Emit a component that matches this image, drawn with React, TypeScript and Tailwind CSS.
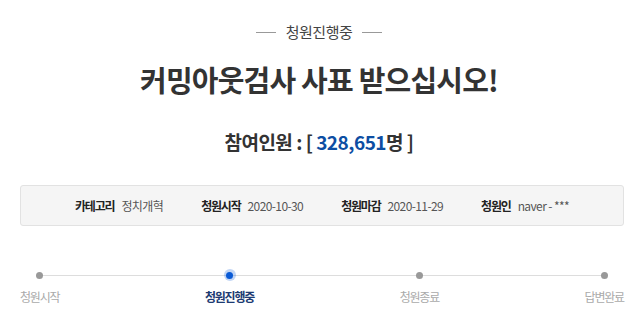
import React from 'react';

const info = [
  { label: '카테고리', value: '정치개혁' },
  { label: '청원시작', value: '2020-10-30' },
  { label: '청원마감', value: '2020-11-29' },
  { label: '청원인', value: 'naver - ***' },
];

const steps = [
  { label: '청원시작', active: false },
  { label: '청원진행중', active: true },
  { label: '청원종료', active: false },
  { label: '답변완료', active: false },
];

export default function App() {
  return (
    <div className="w-[638px] h-[332px] overflow-hidden bg-white pt-[22px] font-['Noto_Sans_CJK_KR','Noto_Sans',sans-serif] text-[#333]">
      {/* status */}
      <div className="flex h-[20px] items-center justify-center gap-[10px]">
        <span className="h-px w-[20px] bg-[#999]" />
        <span className="text-[15px] leading-[20px] tracking-[-0.5px] text-[#444]">청원진행중</span>
        <span className="h-px w-[20px] bg-[#999]" />
      </div>

      {/* title */}
      <h1 className="mt-[20px] text-center text-[29px] font-bold leading-[34px] tracking-[-0.8px] text-[#333]">
        커밍아웃검사 사표 받으십시오!
      </h1>

      {/* participants */}
      <p className="mt-[33px] text-center text-[19px] font-bold leading-[26px] tracking-[-0.5px] text-[#333]">
        참여인원 : [ <span className="text-[#0d4ea3]">328,651</span>명 ]
      </p>

      {/* info box */}
      <div className="ml-[20px] mt-[30px] flex h-[41px] w-[604px] items-center justify-center gap-[38px] rounded-[3px] border border-[#e2e2e2] bg-[#f5f5f5]">
        {info.map((item) => (
          <div key={item.label} className="flex items-center text-[12px] leading-[16px]">
            <span className="font-bold tracking-[-1.2px] text-[#222]">{item.label}</span>
            <span className="ml-[7px] tracking-[-0.6px] text-[#555]">{item.value}</span>
          </div>
        ))}
      </div>

      {/* progress */}
      <div className="relative ml-[20px] mt-[43px] flex w-[604px] justify-between">
        <div className="absolute left-[20px] right-[20px] top-[6px] h-px bg-[#ddd]" />
        {steps.map((step) => (
          <div key={step.label} className="relative flex flex-col items-center">
            <div className="flex h-[12px] w-[12px] items-center justify-center">
              {step.active ? (
                <span className="flex h-[12px] w-[12px] items-center justify-center rounded-full bg-[#0a5bd6]/25">
                  <span className="h-[7px] w-[7px] rounded-full bg-[#0a5bd6]" />
                </span>
              ) : (
                <span className="h-[7px] w-[7px] rounded-full bg-[#999]" />
              )}
            </div>
            <span
              className={
                step.active
                  ? 'mt-[8px] text-[12px] font-bold leading-[16px] tracking-[-1.2px] text-[#1d3b72]'
                  : 'mt-[8px] text-[12px] leading-[16px] tracking-[-1.2px] text-[#aaa]'
              }
            >
              {step.label}
            </span>
          </div>
        ))}
      </div>
    </div>
  );
}
